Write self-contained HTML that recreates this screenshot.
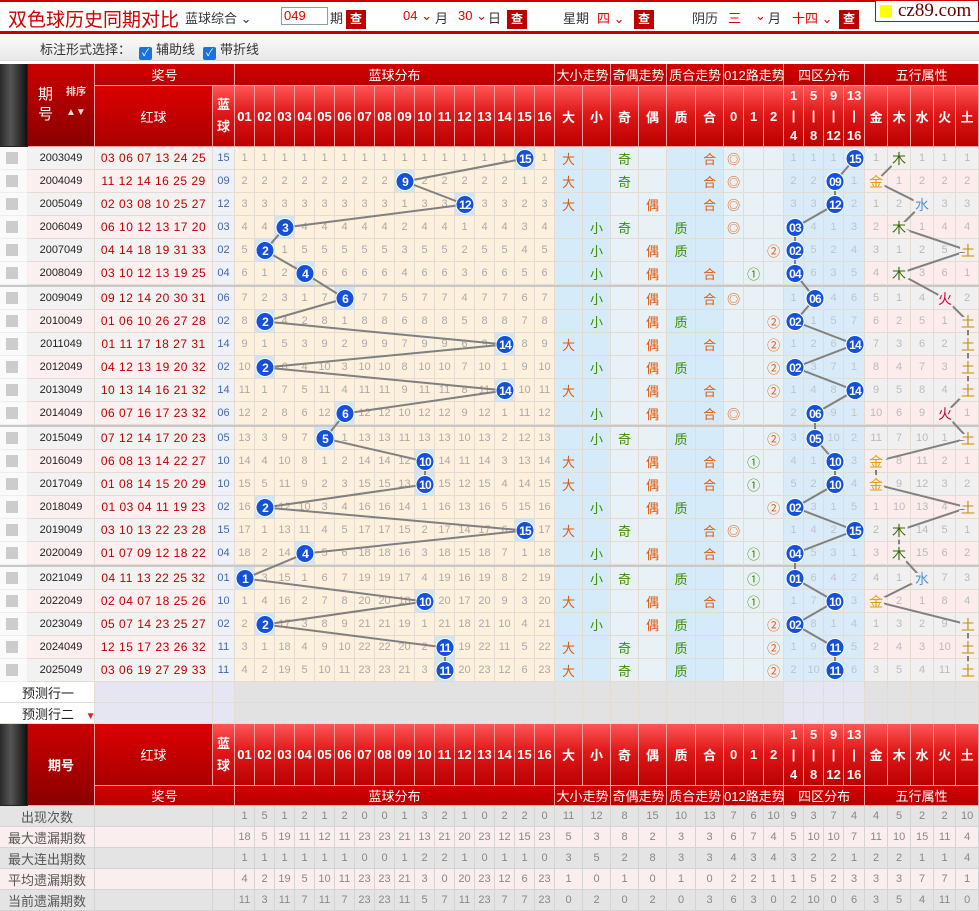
<!DOCTYPE html>
<html><head><meta charset="utf-8">
<style>
*{box-sizing:border-box}
body{margin:0;width:979px;height:910px;overflow:hidden;font-family:"Liberation Sans","Noto Sans CJK SC",sans-serif;background:#fff;position:relative}
.top{position:absolute;left:0;top:0;width:979px;height:34px;border-top:2px solid #c00;border-bottom:3px solid #c00;font-size:13px;color:#333}
.top span{position:absolute;top:6px}
.tt{font-size:19px;color:#c00;left:8px;top:3px!important}
.red{color:#d00}
.btn{position:absolute;top:8px;width:20px;height:19px;background:#b00;color:#fff;font-size:12px;text-align:center;line-height:19px;font-weight:bold}
.logo{position:absolute;right:0;top:-2px;width:104px;height:22px;border:1px solid #c00;background:#fff;font-family:"Liberation Serif",serif;font-size:19px;color:#600;line-height:20px;padding-left:22px}
.logo b{position:absolute;left:4px;top:4px;width:12px;height:12px;background:#ff0}
.bar{position:absolute;left:0;top:35px;width:979px;height:26px;background:linear-gradient(#fafafa,#e9e9e9);border-bottom:1px solid #ddd;font-size:13px;color:#333}
.ck{display:inline-block;width:13px;height:13px;background:#1a73d6;border-radius:2px;color:#fff;font-size:10px;line-height:13px;text-align:center;vertical-align:-2px;margin:0 4px 0 8px}
table{position:absolute;left:0;top:64px;width:979px;border-collapse:separate;border-spacing:0;table-layout:fixed}
td{padding:0;border-right:1px solid #e2dcd2;border-bottom:1px solid #e2dcd2;text-align:center;font-size:11px;color:#aaa;background:#fdf0dc;white-space:nowrap;overflow:hidden}
tr.d{height:23px}
.hd td{background:linear-gradient(#f55,#e01818 45%,#b00);color:#fff;font-weight:bold;font-size:13px;border-color:#f9a0a0}
.gh td{background:linear-gradient(#d40000,#b80000);color:#fff;font-size:13px;font-weight:normal;border-color:#f9a0a0}
td.sd{background:linear-gradient(90deg,#2a2a2a,#555 40%,#333 70%,#111)!important;border-color:#222}
td.qh{background:linear-gradient(#c00,#8a0000)!important}
td.s{background:#fafafa;border-color:#eee}
td.s i{display:block;width:12px;height:12px;margin-left:6px;background:#ccc}
td.q{background:#f2f2f2;color:#222;font-size:11px}
td.r{background:#f2f2f2;color:#b00;font-size:12px;letter-spacing:.5px}
td.b{background:#eef1f7;color:#4466aa;font-size:11px}
tr.e td.q,tr.e td.r{background:#fcefef}
td.h{background:#cfe5fa}
td.x{background:#d6ebfa;font-size:13px}
td.y{background:#e8f1f5;font-size:13px}
td.z{background:#d9ebf8;color:#c0c4cc}
td.w{background:#f0f0f0;color:#bbb}
tr.e td.w{background:#fcecec}
.a{color:#e05a0c!important}.g{color:#3c8c00!important}
tr.sep td{height:2px;background:#c8c8c8;border:0}
td.pl{background:#fff;color:#222;font-size:13px;text-align:left;padding-left:22px}
td.pv{background:#e6e6f2}
td.pg{background:#e2e2e2}
tr.st{height:21px}
tr.st td{background:#e4e4e4;color:#888;font-size:11px;border-color:#d4d4d4}
tr.st.e td{background:#fbeeee}
tr.st td.lb{color:#555;font-size:13px}
svg{position:absolute;left:0;top:0}
</style></head><body>
<div class="top">
<span class="tt">双色球历史同期对比</span>
<span style="left:185px">蓝球综合 ⌄</span>
<span style="left:281px;top:5px;width:47px;height:18px;border:1px solid #999;color:#d00;padding-left:2px;line-height:16px">049</span>
<span style="left:330px">期</span><div class="btn" style="left:346px">查</div>
<span style="left:403px" class="red">04 ⌄</span><span style="left:435px">月</span>
<span style="left:458px" class="red">30 ⌄</span><span style="left:488px">日</span><div class="btn" style="left:507px">查</div>
<span style="left:563px">星期</span><span style="left:597px" class="red">四 ⌄</span><div class="btn" style="left:634px">查</div>
<span style="left:692px">阴历</span><span style="left:728px" class="red">三</span><span style="left:755px" class="red">⌄</span><span style="left:768px">月</span><span style="left:792px" class="red">十四 ⌄</span><div class="btn" style="left:839px">查</div>
<div class="logo"><b></b>cz89.com</div>
</div>
<div class="bar"><span style="position:absolute;left:40px;top:4px">标注形式选择：<span class="ck">✓</span>辅助线<span class="ck">✓</span>带折线</span></div>
<table>
<colgroup><col style="width:28px"><col style="width:67px"><col style="width:118px"><col style="width:22px">
<col style="width:20px"><col style="width:20px"><col style="width:20px"><col style="width:20px"><col style="width:20px"><col style="width:20px"><col style="width:20px"><col style="width:20px"><col style="width:20px"><col style="width:20px"><col style="width:20px"><col style="width:20px"><col style="width:20px"><col style="width:20px"><col style="width:20px"><col style="width:20px">
<col style="width:28px"><col style="width:28px"><col style="width:28px"><col style="width:28px"><col style="width:29px"><col style="width:28px">
<col style="width:20px"><col style="width:20px"><col style="width:20px">
<col style="width:20px"><col style="width:20px"><col style="width:20px"><col style="width:21px">
<col style="width:23px"><col style="width:23px"><col style="width:23px"><col style="width:22px"><col style="width:23px"></colgroup>
<tr class="gh" style="height:22px"><td class="sd" rowspan="2"></td><td class="qh" rowspan="2" style="font-size:15px;font-weight:normal;text-align:left;padding-left:10px;line-height:20px">期<br>号 <span style="position:absolute;margin:-22px 0 0 13px;font-size:10px;font-weight:bold;color:#fdd">排序<br>▲▼</span></td><td colspan="2">奖号</td><td colspan="16">蓝球分布</td><td colspan="2">大小走势</td><td colspan="2">奇偶走势</td><td colspan="2">质合走势</td><td colspan="3">012路走势</td><td colspan="4">四区分布</td><td colspan="5">五行属性</td></tr>
<tr class="hd" style="height:61px"><td style="background:linear-gradient(#d00,#a00);font-weight:normal">红球</td><td style="line-height:22px">蓝<br>球</td><td>01</td><td>02</td><td>03</td><td>04</td><td>05</td><td>06</td><td>07</td><td>08</td><td>09</td><td>10</td><td>11</td><td>12</td><td>13</td><td>14</td><td>15</td><td>16</td><td>大</td><td>小</td><td>奇</td><td>偶</td><td>质</td><td>合</td><td>0</td><td>1</td><td>2</td><td style="line-height:20px">1<br>|<br>4</td><td style="line-height:20px">5<br>|<br>8</td><td style="line-height:20px">9<br>|<br>12</td><td style="line-height:20px">13<br>|<br>16</td><td>金</td><td>木</td><td>水</td><td>火</td><td>土</td></tr>

<tr class="d o"><td class="s"><i></i></td><td class="q">2003049</td><td class="r">03 06 07 13 24 25</td><td class="b">15</td><td>1</td><td>1</td><td>1</td><td>1</td><td>1</td><td>1</td><td>1</td><td>1</td><td>1</td><td>1</td><td>1</td><td>1</td><td>1</td><td>1</td><td class="h"></td><td>1</td><td class="x a">大</td><td class="x"></td><td class="y g">奇</td><td class="y"></td><td class="x"></td><td class="x a">合</td><td class="y a">◎</td><td class="y"></td><td class="y"></td><td class="z">1</td><td class="z">1</td><td class="z">1</td><td class="z"></td><td class="w">1</td><td class="w"></td><td class="w">1</td><td class="w">1</td><td class="w">1</td></tr>
<tr class="d e"><td class="s"><i></i></td><td class="q">2004049</td><td class="r">11 12 14 16 25 29</td><td class="b">09</td><td>2</td><td>2</td><td>2</td><td>2</td><td>2</td><td>2</td><td>2</td><td>2</td><td class="h"></td><td>2</td><td>2</td><td>2</td><td>2</td><td>2</td><td>1</td><td>2</td><td class="x a">大</td><td class="x"></td><td class="y g">奇</td><td class="y"></td><td class="x"></td><td class="x a">合</td><td class="y a">◎</td><td class="y"></td><td class="y"></td><td class="z">2</td><td class="z">2</td><td class="z"></td><td class="z">1</td><td class="w"></td><td class="w">1</td><td class="w">2</td><td class="w">2</td><td class="w">2</td></tr>
<tr class="d o"><td class="s"><i></i></td><td class="q">2005049</td><td class="r">02 03 08 10 25 27</td><td class="b">12</td><td>3</td><td>3</td><td>3</td><td>3</td><td>3</td><td>3</td><td>3</td><td>3</td><td>1</td><td>3</td><td>3</td><td class="h"></td><td>3</td><td>3</td><td>2</td><td>3</td><td class="x a">大</td><td class="x"></td><td class="y"></td><td class="y a">偶</td><td class="x"></td><td class="x a">合</td><td class="y a">◎</td><td class="y"></td><td class="y"></td><td class="z">3</td><td class="z">3</td><td class="z"></td><td class="z">2</td><td class="w">1</td><td class="w">2</td><td class="w"></td><td class="w">3</td><td class="w">3</td></tr>
<tr class="d e"><td class="s"><i></i></td><td class="q">2006049</td><td class="r">06 10 12 13 17 20</td><td class="b">03</td><td>4</td><td>4</td><td class="h"></td><td>4</td><td>4</td><td>4</td><td>4</td><td>4</td><td>2</td><td>4</td><td>4</td><td>1</td><td>4</td><td>4</td><td>3</td><td>4</td><td class="x"></td><td class="x g">小</td><td class="y g">奇</td><td class="y"></td><td class="x g">质</td><td class="x"></td><td class="y a">◎</td><td class="y"></td><td class="y"></td><td class="z"></td><td class="z">4</td><td class="z">1</td><td class="z">3</td><td class="w">2</td><td class="w"></td><td class="w">1</td><td class="w">4</td><td class="w">4</td></tr>
<tr class="d o"><td class="s"><i></i></td><td class="q">2007049</td><td class="r">04 14 18 19 31 33</td><td class="b">02</td><td>5</td><td class="h"></td><td>1</td><td>5</td><td>5</td><td>5</td><td>5</td><td>5</td><td>3</td><td>5</td><td>5</td><td>2</td><td>5</td><td>5</td><td>4</td><td>5</td><td class="x"></td><td class="x g">小</td><td class="y"></td><td class="y a">偶</td><td class="x g">质</td><td class="x"></td><td class="y"></td><td class="y"></td><td class="y a">②</td><td class="z"></td><td class="z">5</td><td class="z">2</td><td class="z">4</td><td class="w">3</td><td class="w">1</td><td class="w">2</td><td class="w">5</td><td class="w"></td></tr>
<tr class="d e"><td class="s"><i></i></td><td class="q">2008049</td><td class="r">03 10 12 13 19 25</td><td class="b">04</td><td>6</td><td>1</td><td>2</td><td class="h"></td><td>6</td><td>6</td><td>6</td><td>6</td><td>4</td><td>6</td><td>6</td><td>3</td><td>6</td><td>6</td><td>5</td><td>6</td><td class="x"></td><td class="x g">小</td><td class="y"></td><td class="y a">偶</td><td class="x"></td><td class="x a">合</td><td class="y"></td><td class="y g">①</td><td class="y"></td><td class="z"></td><td class="z">6</td><td class="z">3</td><td class="z">5</td><td class="w">4</td><td class="w"></td><td class="w">3</td><td class="w">6</td><td class="w">1</td></tr>
<tr class="sep"><td colspan="38"></td></tr>
<tr class="d o"><td class="s"><i></i></td><td class="q">2009049</td><td class="r">09 12 14 20 30 31</td><td class="b">06</td><td>7</td><td>2</td><td>3</td><td>1</td><td>7</td><td class="h"></td><td>7</td><td>7</td><td>5</td><td>7</td><td>7</td><td>4</td><td>7</td><td>7</td><td>6</td><td>7</td><td class="x"></td><td class="x g">小</td><td class="y"></td><td class="y a">偶</td><td class="x"></td><td class="x a">合</td><td class="y a">◎</td><td class="y"></td><td class="y"></td><td class="z">1</td><td class="z"></td><td class="z">4</td><td class="z">6</td><td class="w">5</td><td class="w">1</td><td class="w">4</td><td class="w"></td><td class="w">2</td></tr>
<tr class="d e"><td class="s"><i></i></td><td class="q">2010049</td><td class="r">01 06 10 26 27 28</td><td class="b">02</td><td>8</td><td class="h"></td><td>4</td><td>2</td><td>8</td><td>1</td><td>8</td><td>8</td><td>6</td><td>8</td><td>8</td><td>5</td><td>8</td><td>8</td><td>7</td><td>8</td><td class="x"></td><td class="x g">小</td><td class="y"></td><td class="y a">偶</td><td class="x g">质</td><td class="x"></td><td class="y"></td><td class="y"></td><td class="y a">②</td><td class="z"></td><td class="z">1</td><td class="z">5</td><td class="z">7</td><td class="w">6</td><td class="w">2</td><td class="w">5</td><td class="w">1</td><td class="w"></td></tr>
<tr class="d o"><td class="s"><i></i></td><td class="q">2011049</td><td class="r">01 11 17 18 27 31</td><td class="b">14</td><td>9</td><td>1</td><td>5</td><td>3</td><td>9</td><td>2</td><td>9</td><td>9</td><td>7</td><td>9</td><td>9</td><td>6</td><td>9</td><td class="h"></td><td>8</td><td>9</td><td class="x a">大</td><td class="x"></td><td class="y"></td><td class="y a">偶</td><td class="x"></td><td class="x a">合</td><td class="y"></td><td class="y"></td><td class="y a">②</td><td class="z">1</td><td class="z">2</td><td class="z">6</td><td class="z"></td><td class="w">7</td><td class="w">3</td><td class="w">6</td><td class="w">2</td><td class="w"></td></tr>
<tr class="d e"><td class="s"><i></i></td><td class="q">2012049</td><td class="r">04 12 13 19 20 32</td><td class="b">02</td><td>10</td><td class="h"></td><td>6</td><td>4</td><td>10</td><td>3</td><td>10</td><td>10</td><td>8</td><td>10</td><td>10</td><td>7</td><td>10</td><td>1</td><td>9</td><td>10</td><td class="x"></td><td class="x g">小</td><td class="y"></td><td class="y a">偶</td><td class="x g">质</td><td class="x"></td><td class="y"></td><td class="y"></td><td class="y a">②</td><td class="z"></td><td class="z">3</td><td class="z">7</td><td class="z">1</td><td class="w">8</td><td class="w">4</td><td class="w">7</td><td class="w">3</td><td class="w"></td></tr>
<tr class="d o"><td class="s"><i></i></td><td class="q">2013049</td><td class="r">10 13 14 16 21 32</td><td class="b">14</td><td>11</td><td>1</td><td>7</td><td>5</td><td>11</td><td>4</td><td>11</td><td>11</td><td>9</td><td>11</td><td>11</td><td>8</td><td>11</td><td class="h"></td><td>10</td><td>11</td><td class="x a">大</td><td class="x"></td><td class="y"></td><td class="y a">偶</td><td class="x"></td><td class="x a">合</td><td class="y"></td><td class="y"></td><td class="y a">②</td><td class="z">1</td><td class="z">4</td><td class="z">8</td><td class="z"></td><td class="w">9</td><td class="w">5</td><td class="w">8</td><td class="w">4</td><td class="w"></td></tr>
<tr class="d e"><td class="s"><i></i></td><td class="q">2014049</td><td class="r">06 07 16 17 23 32</td><td class="b">06</td><td>12</td><td>2</td><td>8</td><td>6</td><td>12</td><td class="h"></td><td>12</td><td>12</td><td>10</td><td>12</td><td>12</td><td>9</td><td>12</td><td>1</td><td>11</td><td>12</td><td class="x"></td><td class="x g">小</td><td class="y"></td><td class="y a">偶</td><td class="x"></td><td class="x a">合</td><td class="y a">◎</td><td class="y"></td><td class="y"></td><td class="z">2</td><td class="z"></td><td class="z">9</td><td class="z">1</td><td class="w">10</td><td class="w">6</td><td class="w">9</td><td class="w"></td><td class="w">1</td></tr>
<tr class="sep"><td colspan="38"></td></tr>
<tr class="d o"><td class="s"><i></i></td><td class="q">2015049</td><td class="r">07 12 14 17 20 23</td><td class="b">05</td><td>13</td><td>3</td><td>9</td><td>7</td><td class="h"></td><td>1</td><td>13</td><td>13</td><td>11</td><td>13</td><td>13</td><td>10</td><td>13</td><td>2</td><td>12</td><td>13</td><td class="x"></td><td class="x g">小</td><td class="y g">奇</td><td class="y"></td><td class="x g">质</td><td class="x"></td><td class="y"></td><td class="y"></td><td class="y a">②</td><td class="z">3</td><td class="z"></td><td class="z">10</td><td class="z">2</td><td class="w">11</td><td class="w">7</td><td class="w">10</td><td class="w">1</td><td class="w"></td></tr>
<tr class="d e"><td class="s"><i></i></td><td class="q">2016049</td><td class="r">06 08 13 14 22 27</td><td class="b">10</td><td>14</td><td>4</td><td>10</td><td>8</td><td>1</td><td>2</td><td>14</td><td>14</td><td>12</td><td class="h"></td><td>14</td><td>11</td><td>14</td><td>3</td><td>13</td><td>14</td><td class="x a">大</td><td class="x"></td><td class="y"></td><td class="y a">偶</td><td class="x"></td><td class="x a">合</td><td class="y"></td><td class="y g">①</td><td class="y"></td><td class="z">4</td><td class="z">1</td><td class="z"></td><td class="z">3</td><td class="w"></td><td class="w">8</td><td class="w">11</td><td class="w">2</td><td class="w">1</td></tr>
<tr class="d o"><td class="s"><i></i></td><td class="q">2017049</td><td class="r">01 08 14 15 20 29</td><td class="b">10</td><td>15</td><td>5</td><td>11</td><td>9</td><td>2</td><td>3</td><td>15</td><td>15</td><td>13</td><td class="h"></td><td>15</td><td>12</td><td>15</td><td>4</td><td>14</td><td>15</td><td class="x a">大</td><td class="x"></td><td class="y"></td><td class="y a">偶</td><td class="x"></td><td class="x a">合</td><td class="y"></td><td class="y g">①</td><td class="y"></td><td class="z">5</td><td class="z">2</td><td class="z"></td><td class="z">4</td><td class="w"></td><td class="w">9</td><td class="w">12</td><td class="w">3</td><td class="w">2</td></tr>
<tr class="d e"><td class="s"><i></i></td><td class="q">2018049</td><td class="r">01 03 04 11 19 23</td><td class="b">02</td><td>16</td><td class="h"></td><td>12</td><td>10</td><td>3</td><td>4</td><td>16</td><td>16</td><td>14</td><td>1</td><td>16</td><td>13</td><td>16</td><td>5</td><td>15</td><td>16</td><td class="x"></td><td class="x g">小</td><td class="y"></td><td class="y a">偶</td><td class="x g">质</td><td class="x"></td><td class="y"></td><td class="y"></td><td class="y a">②</td><td class="z"></td><td class="z">3</td><td class="z">1</td><td class="z">5</td><td class="w">1</td><td class="w">10</td><td class="w">13</td><td class="w">4</td><td class="w"></td></tr>
<tr class="d o"><td class="s"><i></i></td><td class="q">2019049</td><td class="r">03 10 13 22 23 28</td><td class="b">15</td><td>17</td><td>1</td><td>13</td><td>11</td><td>4</td><td>5</td><td>17</td><td>17</td><td>15</td><td>2</td><td>17</td><td>14</td><td>17</td><td>6</td><td class="h"></td><td>17</td><td class="x a">大</td><td class="x"></td><td class="y g">奇</td><td class="y"></td><td class="x"></td><td class="x a">合</td><td class="y a">◎</td><td class="y"></td><td class="y"></td><td class="z">1</td><td class="z">4</td><td class="z">2</td><td class="z"></td><td class="w">2</td><td class="w"></td><td class="w">14</td><td class="w">5</td><td class="w">1</td></tr>
<tr class="d e"><td class="s"><i></i></td><td class="q">2020049</td><td class="r">01 07 09 12 18 22</td><td class="b">04</td><td>18</td><td>2</td><td>14</td><td class="h"></td><td>5</td><td>6</td><td>18</td><td>18</td><td>16</td><td>3</td><td>18</td><td>15</td><td>18</td><td>7</td><td>1</td><td>18</td><td class="x"></td><td class="x g">小</td><td class="y"></td><td class="y a">偶</td><td class="x"></td><td class="x a">合</td><td class="y"></td><td class="y g">①</td><td class="y"></td><td class="z"></td><td class="z">5</td><td class="z">3</td><td class="z">1</td><td class="w">3</td><td class="w"></td><td class="w">15</td><td class="w">6</td><td class="w">2</td></tr>
<tr class="sep"><td colspan="38"></td></tr>
<tr class="d o"><td class="s"><i></i></td><td class="q">2021049</td><td class="r">04 11 13 22 25 32</td><td class="b">01</td><td class="h"></td><td>3</td><td>15</td><td>1</td><td>6</td><td>7</td><td>19</td><td>19</td><td>17</td><td>4</td><td>19</td><td>16</td><td>19</td><td>8</td><td>2</td><td>19</td><td class="x"></td><td class="x g">小</td><td class="y g">奇</td><td class="y"></td><td class="x g">质</td><td class="x"></td><td class="y"></td><td class="y g">①</td><td class="y"></td><td class="z"></td><td class="z">6</td><td class="z">4</td><td class="z">2</td><td class="w">4</td><td class="w">1</td><td class="w"></td><td class="w">7</td><td class="w">3</td></tr>
<tr class="d e"><td class="s"><i></i></td><td class="q">2022049</td><td class="r">02 04 07 18 25 26</td><td class="b">10</td><td>1</td><td>4</td><td>16</td><td>2</td><td>7</td><td>8</td><td>20</td><td>20</td><td>18</td><td class="h"></td><td>20</td><td>17</td><td>20</td><td>9</td><td>3</td><td>20</td><td class="x a">大</td><td class="x"></td><td class="y"></td><td class="y a">偶</td><td class="x"></td><td class="x a">合</td><td class="y"></td><td class="y g">①</td><td class="y"></td><td class="z">1</td><td class="z">7</td><td class="z"></td><td class="z">3</td><td class="w"></td><td class="w">2</td><td class="w">1</td><td class="w">8</td><td class="w">4</td></tr>
<tr class="d o"><td class="s"><i></i></td><td class="q">2023049</td><td class="r">05 07 14 23 25 27</td><td class="b">02</td><td>2</td><td class="h"></td><td>17</td><td>3</td><td>8</td><td>9</td><td>21</td><td>21</td><td>19</td><td>1</td><td>21</td><td>18</td><td>21</td><td>10</td><td>4</td><td>21</td><td class="x"></td><td class="x g">小</td><td class="y"></td><td class="y a">偶</td><td class="x g">质</td><td class="x"></td><td class="y"></td><td class="y"></td><td class="y a">②</td><td class="z"></td><td class="z">8</td><td class="z">1</td><td class="z">4</td><td class="w">1</td><td class="w">3</td><td class="w">2</td><td class="w">9</td><td class="w"></td></tr>
<tr class="d e"><td class="s"><i></i></td><td class="q">2024049</td><td class="r">12 15 17 23 26 32</td><td class="b">11</td><td>3</td><td>1</td><td>18</td><td>4</td><td>9</td><td>10</td><td>22</td><td>22</td><td>20</td><td>2</td><td class="h"></td><td>19</td><td>22</td><td>11</td><td>5</td><td>22</td><td class="x a">大</td><td class="x"></td><td class="y g">奇</td><td class="y"></td><td class="x g">质</td><td class="x"></td><td class="y"></td><td class="y"></td><td class="y a">②</td><td class="z">1</td><td class="z">9</td><td class="z"></td><td class="z">5</td><td class="w">2</td><td class="w">4</td><td class="w">3</td><td class="w">10</td><td class="w"></td></tr>
<tr class="d o"><td class="s"><i></i></td><td class="q">2025049</td><td class="r">03 06 19 27 29 33</td><td class="b">11</td><td>4</td><td>2</td><td>19</td><td>5</td><td>10</td><td>11</td><td>23</td><td>23</td><td>21</td><td>3</td><td class="h"></td><td>20</td><td>23</td><td>12</td><td>6</td><td>23</td><td class="x a">大</td><td class="x"></td><td class="y g">奇</td><td class="y"></td><td class="x g">质</td><td class="x"></td><td class="y"></td><td class="y"></td><td class="y a">②</td><td class="z">2</td><td class="z">10</td><td class="z"></td><td class="z">6</td><td class="w">3</td><td class="w">5</td><td class="w">4</td><td class="w">11</td><td class="w"></td></tr>

<tr style="height:21px"><td class="pl" colspan="2">预测行一</td><td class="pv"></td><td class="pv"></td><td class="pg" colspan="16"></td><td class="pg"></td><td class="pg"></td><td class="pg"></td><td class="pg"></td><td class="pg"></td><td class="pg"></td><td class="pg"></td><td class="pg"></td><td class="pg"></td><td class="pv"></td><td class="pv"></td><td class="pv"></td><td class="pv"></td><td class="pg"></td><td class="pg"></td><td class="pg"></td><td class="pg"></td><td class="pg"></td></tr>
<tr style="height:21px"><td class="pl" colspan="2">预测行二 <span style="color:#d22;font-size:10px;margin-left:8px">▼</span></td><td class="pv"></td><td class="pv"></td><td class="pg" colspan="16"></td><td class="pg"></td><td class="pg"></td><td class="pg"></td><td class="pg"></td><td class="pg"></td><td class="pg"></td><td class="pg"></td><td class="pg"></td><td class="pg"></td><td class="pv"></td><td class="pv"></td><td class="pv"></td><td class="pv"></td><td class="pg"></td><td class="pg"></td><td class="pg"></td><td class="pg"></td><td class="pg"></td></tr>

<tr class="hd" style="height:62px"><td class="sd" rowspan="2"></td><td class="qh" rowspan="2">期号</td><td style="background:linear-gradient(#d00,#a00);font-weight:normal">红球</td><td style="line-height:22px">蓝<br>球</td><td>01</td><td>02</td><td>03</td><td>04</td><td>05</td><td>06</td><td>07</td><td>08</td><td>09</td><td>10</td><td>11</td><td>12</td><td>13</td><td>14</td><td>15</td><td>16</td><td>大</td><td>小</td><td>奇</td><td>偶</td><td>质</td><td>合</td><td>0</td><td>1</td><td>2</td><td style="line-height:20px">1<br>|<br>4</td><td style="line-height:20px">5<br>|<br>8</td><td style="line-height:20px">9<br>|<br>12</td><td style="line-height:20px">13<br>|<br>16</td><td>金</td><td>木</td><td>水</td><td>火</td><td>土</td></tr>
<tr class="gh" style="height:20px"><td colspan="2">奖号</td><td colspan="16">蓝球分布</td><td colspan="2">大小走势</td><td colspan="2">奇偶走势</td><td colspan="2">质合走势</td><td colspan="3">012路走势</td><td colspan="4">四区分布</td><td colspan="5">五行属性</td></tr>

<tr class="st o"><td class="lb" colspan="2">出现次数</td><td></td><td></td><td>1</td><td>5</td><td>1</td><td>2</td><td>1</td><td>2</td><td>0</td><td>0</td><td>1</td><td>3</td><td>2</td><td>1</td><td>0</td><td>2</td><td>2</td><td>0</td><td>11</td><td>12</td><td>8</td><td>15</td><td>10</td><td>13</td><td>7</td><td>6</td><td>10</td><td>9</td><td>3</td><td>7</td><td>4</td><td>4</td><td>5</td><td>2</td><td>2</td><td>10</td></tr>
<tr class="st e"><td class="lb" colspan="2">最大遗漏期数</td><td></td><td></td><td>18</td><td>5</td><td>19</td><td>11</td><td>12</td><td>11</td><td>23</td><td>23</td><td>21</td><td>13</td><td>21</td><td>20</td><td>23</td><td>12</td><td>15</td><td>23</td><td>5</td><td>3</td><td>8</td><td>2</td><td>3</td><td>3</td><td>6</td><td>7</td><td>4</td><td>5</td><td>10</td><td>10</td><td>7</td><td>11</td><td>10</td><td>15</td><td>11</td><td>4</td></tr>
<tr class="st o"><td class="lb" colspan="2">最大连出期数</td><td></td><td></td><td>1</td><td>1</td><td>1</td><td>1</td><td>1</td><td>1</td><td>0</td><td>0</td><td>1</td><td>2</td><td>2</td><td>1</td><td>0</td><td>1</td><td>1</td><td>0</td><td>3</td><td>5</td><td>2</td><td>8</td><td>3</td><td>3</td><td>4</td><td>3</td><td>4</td><td>3</td><td>2</td><td>2</td><td>1</td><td>2</td><td>2</td><td>1</td><td>1</td><td>4</td></tr>
<tr class="st e"><td class="lb" colspan="2">平均遗漏期数</td><td></td><td></td><td>4</td><td>2</td><td>19</td><td>5</td><td>10</td><td>11</td><td>23</td><td>23</td><td>21</td><td>3</td><td>0</td><td>20</td><td>23</td><td>12</td><td>6</td><td>23</td><td>1</td><td>0</td><td>1</td><td>0</td><td>1</td><td>0</td><td>2</td><td>2</td><td>1</td><td>1</td><td>5</td><td>2</td><td>3</td><td>3</td><td>3</td><td>7</td><td>7</td><td>1</td></tr>
<tr class="st o"><td class="lb" colspan="2">当前遗漏期数</td><td></td><td></td><td>11</td><td>3</td><td>11</td><td>7</td><td>11</td><td>7</td><td>23</td><td>23</td><td>11</td><td>5</td><td>7</td><td>11</td><td>23</td><td>7</td><td>7</td><td>23</td><td>0</td><td>2</td><td>0</td><td>2</td><td>0</td><td>3</td><td>6</td><td>3</td><td>0</td><td>2</td><td>10</td><td>0</td><td>6</td><td>3</td><td>5</td><td>4</td><td>11</td><td>0</td></tr>
</table>

<svg width="979" height="910" style="pointer-events:none">
<g fill="none" stroke="#808080" stroke-width="2">
<polyline points="525,158.5 405,181.5 465,204.5 285,227.5 265,250.5 305,273.5 345,298.5 265,321.5 505,344.5 265,367.5 505,390.5 345,413.5 325,438.5 425,461.5 425,484.5 265,507.5 525,530.5 305,553.5 245,578.5 425,601.5 265,624.5 445,647.5 445,670.5"/>
<polyline points="855,158.5 835,181.5 835,204.5 795,227.5 795,250.5 795,273.5 815,298.5 795,321.5 855,344.5 795,367.5 855,390.5 815,413.5 815,438.5 835,461.5 835,484.5 795,507.5 855,530.5 795,553.5 795,578.5 835,601.5 795,624.5 835,647.5 835,670.5"/>
<polyline points="899,158.5 876,181.5 922,204.5 899,227.5 968,250.5 899,273.5 945,298.5 968,321.5 968,344.5 968,367.5 968,390.5 945,413.5 968,438.5 876,461.5 876,484.5 968,507.5 899,530.5 899,553.5 922,578.5 876,601.5 968,624.5 968,647.5 968,670.5"/>
</g>
<g fill="#1450d8" stroke="#fff" stroke-width="1">
<circle cx="525" cy="158.5" r="9"/><circle cx="405" cy="181.5" r="9"/><circle cx="465" cy="204.5" r="9"/><circle cx="285" cy="227.5" r="9"/><circle cx="265" cy="250.5" r="9"/><circle cx="305" cy="273.5" r="9"/><circle cx="345" cy="298.5" r="9"/><circle cx="265" cy="321.5" r="9"/><circle cx="505" cy="344.5" r="9"/><circle cx="265" cy="367.5" r="9"/><circle cx="505" cy="390.5" r="9"/><circle cx="345" cy="413.5" r="9"/><circle cx="325" cy="438.5" r="9"/><circle cx="425" cy="461.5" r="9"/><circle cx="425" cy="484.5" r="9"/><circle cx="265" cy="507.5" r="9"/><circle cx="525" cy="530.5" r="9"/><circle cx="305" cy="553.5" r="9"/><circle cx="245" cy="578.5" r="9"/><circle cx="425" cy="601.5" r="9"/><circle cx="265" cy="624.5" r="9"/><circle cx="445" cy="647.5" r="9"/><circle cx="445" cy="670.5" r="9"/>
<circle cx="855" cy="158.5" r="9"/><circle cx="835" cy="181.5" r="9"/><circle cx="835" cy="204.5" r="9"/><circle cx="795" cy="227.5" r="9"/><circle cx="795" cy="250.5" r="9"/><circle cx="795" cy="273.5" r="9"/><circle cx="815" cy="298.5" r="9"/><circle cx="795" cy="321.5" r="9"/><circle cx="855" cy="344.5" r="9"/><circle cx="795" cy="367.5" r="9"/><circle cx="855" cy="390.5" r="9"/><circle cx="815" cy="413.5" r="9"/><circle cx="815" cy="438.5" r="9"/><circle cx="835" cy="461.5" r="9"/><circle cx="835" cy="484.5" r="9"/><circle cx="795" cy="507.5" r="9"/><circle cx="855" cy="530.5" r="9"/><circle cx="795" cy="553.5" r="9"/><circle cx="795" cy="578.5" r="9"/><circle cx="835" cy="601.5" r="9"/><circle cx="795" cy="624.5" r="9"/><circle cx="835" cy="647.5" r="9"/><circle cx="835" cy="670.5" r="9"/>
</g>
<g fill="#fff" font-family="Liberation Sans,sans-serif" font-size="12" font-weight="bold" text-anchor="middle" letter-spacing="-0.8">
<text x="525" y="163">15</text><text x="405" y="186">9</text><text x="465" y="209">12</text><text x="285" y="232">3</text><text x="265" y="255">2</text><text x="305" y="278">4</text><text x="345" y="303">6</text><text x="265" y="326">2</text><text x="505" y="349">14</text><text x="265" y="372">2</text><text x="505" y="395">14</text><text x="345" y="418">6</text><text x="325" y="443">5</text><text x="425" y="466">10</text><text x="425" y="489">10</text><text x="265" y="512">2</text><text x="525" y="535">15</text><text x="305" y="558">4</text><text x="245" y="583">1</text><text x="425" y="606">10</text><text x="265" y="629">2</text><text x="445" y="652">11</text><text x="445" y="675">11</text>
<text x="855" y="163">15</text><text x="835" y="186">09</text><text x="835" y="209">12</text><text x="795" y="232">03</text><text x="795" y="255">02</text><text x="795" y="278">04</text><text x="815" y="303">06</text><text x="795" y="326">02</text><text x="855" y="349">14</text><text x="795" y="372">02</text><text x="855" y="395">14</text><text x="815" y="418">06</text><text x="815" y="443">05</text><text x="835" y="466">10</text><text x="835" y="489">10</text><text x="795" y="512">02</text><text x="855" y="535">15</text><text x="795" y="558">04</text><text x="795" y="583">01</text><text x="835" y="606">10</text><text x="795" y="629">02</text><text x="835" y="652">11</text><text x="835" y="675">11</text>
</g>
<g font-family="Liberation Sans,Noto Sans CJK SC,sans-serif" font-size="14" text-anchor="middle" stroke="#f6eeee" stroke-width="5" style="paint-order:stroke">
<text x="899" y="164" fill="#336600">木</text><text x="876" y="187" fill="#e0a000">金</text><text x="922" y="210" fill="#4499dd">水</text><text x="899" y="233" fill="#336600">木</text><text x="968" y="256" fill="#c09000">土</text><text x="899" y="279" fill="#336600">木</text><text x="945" y="304" fill="#cc0033">火</text><text x="968" y="327" fill="#c09000">土</text><text x="968" y="350" fill="#c09000">土</text><text x="968" y="373" fill="#c09000">土</text><text x="968" y="396" fill="#c09000">土</text><text x="945" y="419" fill="#cc0033">火</text><text x="968" y="444" fill="#c09000">土</text><text x="876" y="467" fill="#e0a000">金</text><text x="876" y="490" fill="#e0a000">金</text><text x="968" y="513" fill="#c09000">土</text><text x="899" y="536" fill="#336600">木</text><text x="899" y="559" fill="#336600">木</text><text x="922" y="584" fill="#4499dd">水</text><text x="876" y="607" fill="#e0a000">金</text><text x="968" y="630" fill="#c09000">土</text><text x="968" y="653" fill="#c09000">土</text><text x="968" y="676" fill="#c09000">土</text>
</g>
</svg>
</body></html>
